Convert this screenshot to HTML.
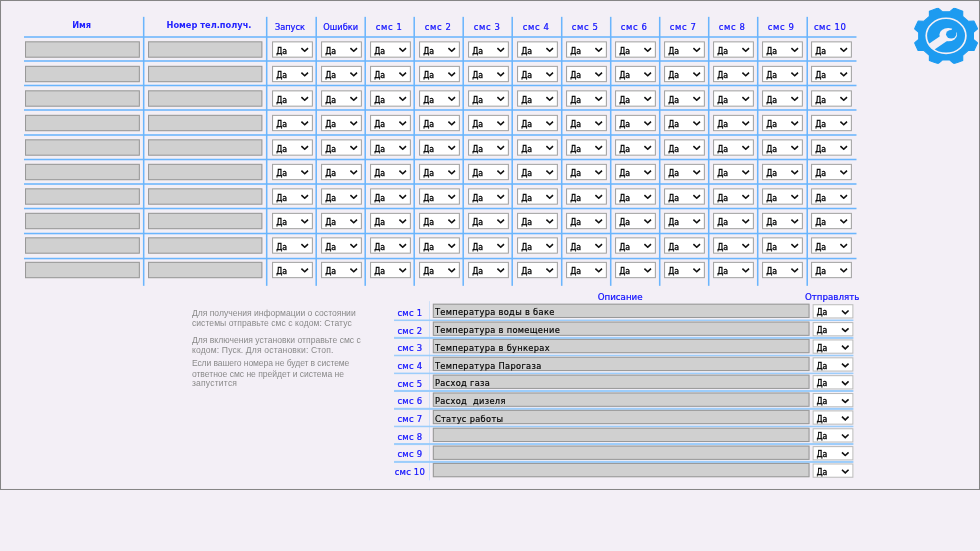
<!DOCTYPE html><html lang="ru"><head><meta charset="utf-8"><title>смс</title><style>
html,body{margin:0;padding:0;}
body{width:980px;height:551px;overflow:hidden;background:#f3eff6;font-family:"DejaVu Sans Condensed","Liberation Sans",sans-serif;}
#stage{position:absolute;left:0;top:0;width:1920px;height:1080px;transform:scale(0.510417);transform-origin:0 0;background:#f3eff6;overflow:hidden;filter:contrast(1);}
#frame{position:absolute;left:0;top:0;width:1920px;height:960px;border:2px solid #858585;border-right-width:2.5px;border-bottom-width:2.5px;box-sizing:border-box;}
table{border-collapse:separate;border-spacing:0;}
#t1{position:absolute;left:46px;top:33px;}
#t1 th,#t1 td{padding:0 0 0 3px;margin:0;box-sizing:border-box;vertical-align:top;}
#t1 th:first-child,#t1 td:first-child{padding-left:0;}
.v1{position:absolute;top:33px;height:527px;width:3px;background:#6ab5fd;}
#t1 th,.hd2,.lab{-webkit-text-stroke:0.45px #1212ff;}
#t1 th{height:37px;color:#1212ff;font-weight:normal;font-size:17.9px;text-align:center;vertical-align:top;line-height:20px;padding-top:9px;white-space:nowrap;}
#t1 th.b{font-weight:bold;font-size:18px;padding-top:6.4px;-webkit-text-stroke:0;color:#2222ff;}
#t1 th.s{font-size:18.4px;letter-spacing:1px;word-spacing:0.4px;}
#t1 th.s span{position:relative;left:-1.2px;}
#t1 th .sh{position:relative;left:-3.5px;}
#t1 td{height:48px;}
.h1{position:absolute;left:47px;width:1631px;height:3px;background:#6ab5fd;}
#t1 tr.last td{height:58px;}
#t1 .c1{width:234px;}
#t1 .c2{width:242px;}
#t1 .cs{width:96px;}
input.txt{display:block;box-sizing:border-box;border:2px solid #999;background:#d0d0d0;margin:0;padding:0 5px;font-family:"DejaVu Sans Condensed","Liberation Sans",sans-serif;color:#000;border-radius:0;outline:none;}
#t1 input.txt{width:225px;height:32px;margin:11px 0 0 3px;}
#t1 td.c2 input.txt{width:224px;margin-left:6.5px;}
.sel{position:relative;display:block;box-sizing:border-box;width:80px;height:32px;background:#fff;border:2px solid #a0a0a0;}
.sel select{position:absolute;left:0;top:0;width:100%;height:100%;box-sizing:border-box;-webkit-appearance:none;appearance:none;border:0;background:transparent;margin:0;padding:4px 0 0 6px;font-family:"DejaVu Sans Condensed","Liberation Sans",sans-serif;font-size:17px;color:#000;outline:none;-webkit-text-stroke:0.6px #000;}
.sel svg{position:absolute;right:6px;top:9px;width:16px;height:11px;pointer-events:none;}
#t1 .sel{margin:11px 0 0 8px;}
#info{position:absolute;left:376px;top:0;width:360px;color:#8a8a8a;font-family:"Liberation Sans","DejaVu Sans",sans-serif;font-size:16.8px;line-height:19.5px;}
#info p{position:absolute;left:0;margin:0;white-space:nowrap;}
#t2{position:absolute;left:0;top:0;}
.hd2{position:absolute;color:#1212ff;font-family:"DejaVu Sans","Liberation Sans",sans-serif;font-size:17px;line-height:20px;white-space:nowrap;}
.lab{position:absolute;left:772px;width:62px;text-align:center;color:#1212ff;font-size:18.4px;letter-spacing:0.4px;line-height:20px;white-space:nowrap;}
.hl{position:absolute;left:772px;width:900px;height:3.5px;background:#9ccdfb;}
#vl{position:absolute;left:840.7px;top:590px;width:1.7px;height:351px;background:#a8d2fa;}
#t2 .inp{position:absolute;left:848px;width:738px;height:28px;box-sizing:border-box;border:2px solid #999;background:#d0d0d0;}
#t2 .inp input{position:absolute;left:0;top:0;width:100%;height:29.5px;box-sizing:border-box;border:0;background:transparent;margin:0;padding:0 2px;font-family:"DejaVu Sans Condensed","Liberation Sans",sans-serif;font-size:18px;letter-spacing:0.63px;color:#000;outline:none;-webkit-text-stroke:0.35px #000;}
#t2 .sel{position:absolute;left:1592px;height:28px;border-color:#b9b9b9;}
#t2 .sel svg{top:8px;}
#t2 .sel select{padding-top:4px;padding-left:5.6px;}
#gear{position:absolute;left:1791px;top:14.8px;width:125px;height:110.5px;}
</style></head><body><div id="stage"><div id="frame"></div>
<table id="t1"><tr><th class="c1 b"><span style="position:relative;left:-3px">Имя</span></th><th class="c2 b"><span style="position:relative;left:7px">Номер тел.получ.</span></th>
<th class="cs"><span class="sh">Запуск</span></th>
<th class="cs">Ошибки</th>
<th class="cs s"><span>смс 1</span></th>
<th class="cs s"><span>смс 2</span></th>
<th class="cs s"><span>смс 3</span></th>
<th class="cs s"><span>смс 4</span></th>
<th class="cs s"><span>смс 5</span></th>
<th class="cs s"><span>смс 6</span></th>
<th class="cs s"><span>смс 7</span></th>
<th class="cs s"><span>смс 8</span></th>
<th class="cs s"><span>смс 9</span></th>
<th class="cs s"><span>смс 10</span></th>
</tr>
<tr><td class="c1"><input class="txt" type="text"></td><td class="c2"><input class="txt" type="text"></td>
<td class="cs"><div class="sel"><select><option>Да</option><option>Нет</option></select><svg viewBox="0 0 16 11"><polyline points="1.5,2.3 8,8.4 14.5,2.3" fill="none" stroke="#111" stroke-width="3.2"/></svg></div></td>
<td class="cs"><div class="sel"><select><option>Да</option><option>Нет</option></select><svg viewBox="0 0 16 11"><polyline points="1.5,2.3 8,8.4 14.5,2.3" fill="none" stroke="#111" stroke-width="3.2"/></svg></div></td>
<td class="cs"><div class="sel"><select><option>Да</option><option>Нет</option></select><svg viewBox="0 0 16 11"><polyline points="1.5,2.3 8,8.4 14.5,2.3" fill="none" stroke="#111" stroke-width="3.2"/></svg></div></td>
<td class="cs"><div class="sel"><select><option>Да</option><option>Нет</option></select><svg viewBox="0 0 16 11"><polyline points="1.5,2.3 8,8.4 14.5,2.3" fill="none" stroke="#111" stroke-width="3.2"/></svg></div></td>
<td class="cs"><div class="sel"><select><option>Да</option><option>Нет</option></select><svg viewBox="0 0 16 11"><polyline points="1.5,2.3 8,8.4 14.5,2.3" fill="none" stroke="#111" stroke-width="3.2"/></svg></div></td>
<td class="cs"><div class="sel"><select><option>Да</option><option>Нет</option></select><svg viewBox="0 0 16 11"><polyline points="1.5,2.3 8,8.4 14.5,2.3" fill="none" stroke="#111" stroke-width="3.2"/></svg></div></td>
<td class="cs"><div class="sel"><select><option>Да</option><option>Нет</option></select><svg viewBox="0 0 16 11"><polyline points="1.5,2.3 8,8.4 14.5,2.3" fill="none" stroke="#111" stroke-width="3.2"/></svg></div></td>
<td class="cs"><div class="sel"><select><option>Да</option><option>Нет</option></select><svg viewBox="0 0 16 11"><polyline points="1.5,2.3 8,8.4 14.5,2.3" fill="none" stroke="#111" stroke-width="3.2"/></svg></div></td>
<td class="cs"><div class="sel"><select><option>Да</option><option>Нет</option></select><svg viewBox="0 0 16 11"><polyline points="1.5,2.3 8,8.4 14.5,2.3" fill="none" stroke="#111" stroke-width="3.2"/></svg></div></td>
<td class="cs"><div class="sel"><select><option>Да</option><option>Нет</option></select><svg viewBox="0 0 16 11"><polyline points="1.5,2.3 8,8.4 14.5,2.3" fill="none" stroke="#111" stroke-width="3.2"/></svg></div></td>
<td class="cs"><div class="sel"><select><option>Да</option><option>Нет</option></select><svg viewBox="0 0 16 11"><polyline points="1.5,2.3 8,8.4 14.5,2.3" fill="none" stroke="#111" stroke-width="3.2"/></svg></div></td>
<td class="cs"><div class="sel"><select><option>Да</option><option>Нет</option></select><svg viewBox="0 0 16 11"><polyline points="1.5,2.3 8,8.4 14.5,2.3" fill="none" stroke="#111" stroke-width="3.2"/></svg></div></td>
</tr>
<tr><td class="c1"><input class="txt" type="text"></td><td class="c2"><input class="txt" type="text"></td>
<td class="cs"><div class="sel"><select><option>Да</option><option>Нет</option></select><svg viewBox="0 0 16 11"><polyline points="1.5,2.3 8,8.4 14.5,2.3" fill="none" stroke="#111" stroke-width="3.2"/></svg></div></td>
<td class="cs"><div class="sel"><select><option>Да</option><option>Нет</option></select><svg viewBox="0 0 16 11"><polyline points="1.5,2.3 8,8.4 14.5,2.3" fill="none" stroke="#111" stroke-width="3.2"/></svg></div></td>
<td class="cs"><div class="sel"><select><option>Да</option><option>Нет</option></select><svg viewBox="0 0 16 11"><polyline points="1.5,2.3 8,8.4 14.5,2.3" fill="none" stroke="#111" stroke-width="3.2"/></svg></div></td>
<td class="cs"><div class="sel"><select><option>Да</option><option>Нет</option></select><svg viewBox="0 0 16 11"><polyline points="1.5,2.3 8,8.4 14.5,2.3" fill="none" stroke="#111" stroke-width="3.2"/></svg></div></td>
<td class="cs"><div class="sel"><select><option>Да</option><option>Нет</option></select><svg viewBox="0 0 16 11"><polyline points="1.5,2.3 8,8.4 14.5,2.3" fill="none" stroke="#111" stroke-width="3.2"/></svg></div></td>
<td class="cs"><div class="sel"><select><option>Да</option><option>Нет</option></select><svg viewBox="0 0 16 11"><polyline points="1.5,2.3 8,8.4 14.5,2.3" fill="none" stroke="#111" stroke-width="3.2"/></svg></div></td>
<td class="cs"><div class="sel"><select><option>Да</option><option>Нет</option></select><svg viewBox="0 0 16 11"><polyline points="1.5,2.3 8,8.4 14.5,2.3" fill="none" stroke="#111" stroke-width="3.2"/></svg></div></td>
<td class="cs"><div class="sel"><select><option>Да</option><option>Нет</option></select><svg viewBox="0 0 16 11"><polyline points="1.5,2.3 8,8.4 14.5,2.3" fill="none" stroke="#111" stroke-width="3.2"/></svg></div></td>
<td class="cs"><div class="sel"><select><option>Да</option><option>Нет</option></select><svg viewBox="0 0 16 11"><polyline points="1.5,2.3 8,8.4 14.5,2.3" fill="none" stroke="#111" stroke-width="3.2"/></svg></div></td>
<td class="cs"><div class="sel"><select><option>Да</option><option>Нет</option></select><svg viewBox="0 0 16 11"><polyline points="1.5,2.3 8,8.4 14.5,2.3" fill="none" stroke="#111" stroke-width="3.2"/></svg></div></td>
<td class="cs"><div class="sel"><select><option>Да</option><option>Нет</option></select><svg viewBox="0 0 16 11"><polyline points="1.5,2.3 8,8.4 14.5,2.3" fill="none" stroke="#111" stroke-width="3.2"/></svg></div></td>
<td class="cs"><div class="sel"><select><option>Да</option><option>Нет</option></select><svg viewBox="0 0 16 11"><polyline points="1.5,2.3 8,8.4 14.5,2.3" fill="none" stroke="#111" stroke-width="3.2"/></svg></div></td>
</tr>
<tr><td class="c1"><input class="txt" type="text"></td><td class="c2"><input class="txt" type="text"></td>
<td class="cs"><div class="sel"><select><option>Да</option><option>Нет</option></select><svg viewBox="0 0 16 11"><polyline points="1.5,2.3 8,8.4 14.5,2.3" fill="none" stroke="#111" stroke-width="3.2"/></svg></div></td>
<td class="cs"><div class="sel"><select><option>Да</option><option>Нет</option></select><svg viewBox="0 0 16 11"><polyline points="1.5,2.3 8,8.4 14.5,2.3" fill="none" stroke="#111" stroke-width="3.2"/></svg></div></td>
<td class="cs"><div class="sel"><select><option>Да</option><option>Нет</option></select><svg viewBox="0 0 16 11"><polyline points="1.5,2.3 8,8.4 14.5,2.3" fill="none" stroke="#111" stroke-width="3.2"/></svg></div></td>
<td class="cs"><div class="sel"><select><option>Да</option><option>Нет</option></select><svg viewBox="0 0 16 11"><polyline points="1.5,2.3 8,8.4 14.5,2.3" fill="none" stroke="#111" stroke-width="3.2"/></svg></div></td>
<td class="cs"><div class="sel"><select><option>Да</option><option>Нет</option></select><svg viewBox="0 0 16 11"><polyline points="1.5,2.3 8,8.4 14.5,2.3" fill="none" stroke="#111" stroke-width="3.2"/></svg></div></td>
<td class="cs"><div class="sel"><select><option>Да</option><option>Нет</option></select><svg viewBox="0 0 16 11"><polyline points="1.5,2.3 8,8.4 14.5,2.3" fill="none" stroke="#111" stroke-width="3.2"/></svg></div></td>
<td class="cs"><div class="sel"><select><option>Да</option><option>Нет</option></select><svg viewBox="0 0 16 11"><polyline points="1.5,2.3 8,8.4 14.5,2.3" fill="none" stroke="#111" stroke-width="3.2"/></svg></div></td>
<td class="cs"><div class="sel"><select><option>Да</option><option>Нет</option></select><svg viewBox="0 0 16 11"><polyline points="1.5,2.3 8,8.4 14.5,2.3" fill="none" stroke="#111" stroke-width="3.2"/></svg></div></td>
<td class="cs"><div class="sel"><select><option>Да</option><option>Нет</option></select><svg viewBox="0 0 16 11"><polyline points="1.5,2.3 8,8.4 14.5,2.3" fill="none" stroke="#111" stroke-width="3.2"/></svg></div></td>
<td class="cs"><div class="sel"><select><option>Да</option><option>Нет</option></select><svg viewBox="0 0 16 11"><polyline points="1.5,2.3 8,8.4 14.5,2.3" fill="none" stroke="#111" stroke-width="3.2"/></svg></div></td>
<td class="cs"><div class="sel"><select><option>Да</option><option>Нет</option></select><svg viewBox="0 0 16 11"><polyline points="1.5,2.3 8,8.4 14.5,2.3" fill="none" stroke="#111" stroke-width="3.2"/></svg></div></td>
<td class="cs"><div class="sel"><select><option>Да</option><option>Нет</option></select><svg viewBox="0 0 16 11"><polyline points="1.5,2.3 8,8.4 14.5,2.3" fill="none" stroke="#111" stroke-width="3.2"/></svg></div></td>
</tr>
<tr><td class="c1"><input class="txt" type="text"></td><td class="c2"><input class="txt" type="text"></td>
<td class="cs"><div class="sel"><select><option>Да</option><option>Нет</option></select><svg viewBox="0 0 16 11"><polyline points="1.5,2.3 8,8.4 14.5,2.3" fill="none" stroke="#111" stroke-width="3.2"/></svg></div></td>
<td class="cs"><div class="sel"><select><option>Да</option><option>Нет</option></select><svg viewBox="0 0 16 11"><polyline points="1.5,2.3 8,8.4 14.5,2.3" fill="none" stroke="#111" stroke-width="3.2"/></svg></div></td>
<td class="cs"><div class="sel"><select><option>Да</option><option>Нет</option></select><svg viewBox="0 0 16 11"><polyline points="1.5,2.3 8,8.4 14.5,2.3" fill="none" stroke="#111" stroke-width="3.2"/></svg></div></td>
<td class="cs"><div class="sel"><select><option>Да</option><option>Нет</option></select><svg viewBox="0 0 16 11"><polyline points="1.5,2.3 8,8.4 14.5,2.3" fill="none" stroke="#111" stroke-width="3.2"/></svg></div></td>
<td class="cs"><div class="sel"><select><option>Да</option><option>Нет</option></select><svg viewBox="0 0 16 11"><polyline points="1.5,2.3 8,8.4 14.5,2.3" fill="none" stroke="#111" stroke-width="3.2"/></svg></div></td>
<td class="cs"><div class="sel"><select><option>Да</option><option>Нет</option></select><svg viewBox="0 0 16 11"><polyline points="1.5,2.3 8,8.4 14.5,2.3" fill="none" stroke="#111" stroke-width="3.2"/></svg></div></td>
<td class="cs"><div class="sel"><select><option>Да</option><option>Нет</option></select><svg viewBox="0 0 16 11"><polyline points="1.5,2.3 8,8.4 14.5,2.3" fill="none" stroke="#111" stroke-width="3.2"/></svg></div></td>
<td class="cs"><div class="sel"><select><option>Да</option><option>Нет</option></select><svg viewBox="0 0 16 11"><polyline points="1.5,2.3 8,8.4 14.5,2.3" fill="none" stroke="#111" stroke-width="3.2"/></svg></div></td>
<td class="cs"><div class="sel"><select><option>Да</option><option>Нет</option></select><svg viewBox="0 0 16 11"><polyline points="1.5,2.3 8,8.4 14.5,2.3" fill="none" stroke="#111" stroke-width="3.2"/></svg></div></td>
<td class="cs"><div class="sel"><select><option>Да</option><option>Нет</option></select><svg viewBox="0 0 16 11"><polyline points="1.5,2.3 8,8.4 14.5,2.3" fill="none" stroke="#111" stroke-width="3.2"/></svg></div></td>
<td class="cs"><div class="sel"><select><option>Да</option><option>Нет</option></select><svg viewBox="0 0 16 11"><polyline points="1.5,2.3 8,8.4 14.5,2.3" fill="none" stroke="#111" stroke-width="3.2"/></svg></div></td>
<td class="cs"><div class="sel"><select><option>Да</option><option>Нет</option></select><svg viewBox="0 0 16 11"><polyline points="1.5,2.3 8,8.4 14.5,2.3" fill="none" stroke="#111" stroke-width="3.2"/></svg></div></td>
</tr>
<tr><td class="c1"><input class="txt" type="text"></td><td class="c2"><input class="txt" type="text"></td>
<td class="cs"><div class="sel"><select><option>Да</option><option>Нет</option></select><svg viewBox="0 0 16 11"><polyline points="1.5,2.3 8,8.4 14.5,2.3" fill="none" stroke="#111" stroke-width="3.2"/></svg></div></td>
<td class="cs"><div class="sel"><select><option>Да</option><option>Нет</option></select><svg viewBox="0 0 16 11"><polyline points="1.5,2.3 8,8.4 14.5,2.3" fill="none" stroke="#111" stroke-width="3.2"/></svg></div></td>
<td class="cs"><div class="sel"><select><option>Да</option><option>Нет</option></select><svg viewBox="0 0 16 11"><polyline points="1.5,2.3 8,8.4 14.5,2.3" fill="none" stroke="#111" stroke-width="3.2"/></svg></div></td>
<td class="cs"><div class="sel"><select><option>Да</option><option>Нет</option></select><svg viewBox="0 0 16 11"><polyline points="1.5,2.3 8,8.4 14.5,2.3" fill="none" stroke="#111" stroke-width="3.2"/></svg></div></td>
<td class="cs"><div class="sel"><select><option>Да</option><option>Нет</option></select><svg viewBox="0 0 16 11"><polyline points="1.5,2.3 8,8.4 14.5,2.3" fill="none" stroke="#111" stroke-width="3.2"/></svg></div></td>
<td class="cs"><div class="sel"><select><option>Да</option><option>Нет</option></select><svg viewBox="0 0 16 11"><polyline points="1.5,2.3 8,8.4 14.5,2.3" fill="none" stroke="#111" stroke-width="3.2"/></svg></div></td>
<td class="cs"><div class="sel"><select><option>Да</option><option>Нет</option></select><svg viewBox="0 0 16 11"><polyline points="1.5,2.3 8,8.4 14.5,2.3" fill="none" stroke="#111" stroke-width="3.2"/></svg></div></td>
<td class="cs"><div class="sel"><select><option>Да</option><option>Нет</option></select><svg viewBox="0 0 16 11"><polyline points="1.5,2.3 8,8.4 14.5,2.3" fill="none" stroke="#111" stroke-width="3.2"/></svg></div></td>
<td class="cs"><div class="sel"><select><option>Да</option><option>Нет</option></select><svg viewBox="0 0 16 11"><polyline points="1.5,2.3 8,8.4 14.5,2.3" fill="none" stroke="#111" stroke-width="3.2"/></svg></div></td>
<td class="cs"><div class="sel"><select><option>Да</option><option>Нет</option></select><svg viewBox="0 0 16 11"><polyline points="1.5,2.3 8,8.4 14.5,2.3" fill="none" stroke="#111" stroke-width="3.2"/></svg></div></td>
<td class="cs"><div class="sel"><select><option>Да</option><option>Нет</option></select><svg viewBox="0 0 16 11"><polyline points="1.5,2.3 8,8.4 14.5,2.3" fill="none" stroke="#111" stroke-width="3.2"/></svg></div></td>
<td class="cs"><div class="sel"><select><option>Да</option><option>Нет</option></select><svg viewBox="0 0 16 11"><polyline points="1.5,2.3 8,8.4 14.5,2.3" fill="none" stroke="#111" stroke-width="3.2"/></svg></div></td>
</tr>
<tr><td class="c1"><input class="txt" type="text"></td><td class="c2"><input class="txt" type="text"></td>
<td class="cs"><div class="sel"><select><option>Да</option><option>Нет</option></select><svg viewBox="0 0 16 11"><polyline points="1.5,2.3 8,8.4 14.5,2.3" fill="none" stroke="#111" stroke-width="3.2"/></svg></div></td>
<td class="cs"><div class="sel"><select><option>Да</option><option>Нет</option></select><svg viewBox="0 0 16 11"><polyline points="1.5,2.3 8,8.4 14.5,2.3" fill="none" stroke="#111" stroke-width="3.2"/></svg></div></td>
<td class="cs"><div class="sel"><select><option>Да</option><option>Нет</option></select><svg viewBox="0 0 16 11"><polyline points="1.5,2.3 8,8.4 14.5,2.3" fill="none" stroke="#111" stroke-width="3.2"/></svg></div></td>
<td class="cs"><div class="sel"><select><option>Да</option><option>Нет</option></select><svg viewBox="0 0 16 11"><polyline points="1.5,2.3 8,8.4 14.5,2.3" fill="none" stroke="#111" stroke-width="3.2"/></svg></div></td>
<td class="cs"><div class="sel"><select><option>Да</option><option>Нет</option></select><svg viewBox="0 0 16 11"><polyline points="1.5,2.3 8,8.4 14.5,2.3" fill="none" stroke="#111" stroke-width="3.2"/></svg></div></td>
<td class="cs"><div class="sel"><select><option>Да</option><option>Нет</option></select><svg viewBox="0 0 16 11"><polyline points="1.5,2.3 8,8.4 14.5,2.3" fill="none" stroke="#111" stroke-width="3.2"/></svg></div></td>
<td class="cs"><div class="sel"><select><option>Да</option><option>Нет</option></select><svg viewBox="0 0 16 11"><polyline points="1.5,2.3 8,8.4 14.5,2.3" fill="none" stroke="#111" stroke-width="3.2"/></svg></div></td>
<td class="cs"><div class="sel"><select><option>Да</option><option>Нет</option></select><svg viewBox="0 0 16 11"><polyline points="1.5,2.3 8,8.4 14.5,2.3" fill="none" stroke="#111" stroke-width="3.2"/></svg></div></td>
<td class="cs"><div class="sel"><select><option>Да</option><option>Нет</option></select><svg viewBox="0 0 16 11"><polyline points="1.5,2.3 8,8.4 14.5,2.3" fill="none" stroke="#111" stroke-width="3.2"/></svg></div></td>
<td class="cs"><div class="sel"><select><option>Да</option><option>Нет</option></select><svg viewBox="0 0 16 11"><polyline points="1.5,2.3 8,8.4 14.5,2.3" fill="none" stroke="#111" stroke-width="3.2"/></svg></div></td>
<td class="cs"><div class="sel"><select><option>Да</option><option>Нет</option></select><svg viewBox="0 0 16 11"><polyline points="1.5,2.3 8,8.4 14.5,2.3" fill="none" stroke="#111" stroke-width="3.2"/></svg></div></td>
<td class="cs"><div class="sel"><select><option>Да</option><option>Нет</option></select><svg viewBox="0 0 16 11"><polyline points="1.5,2.3 8,8.4 14.5,2.3" fill="none" stroke="#111" stroke-width="3.2"/></svg></div></td>
</tr>
<tr><td class="c1"><input class="txt" type="text"></td><td class="c2"><input class="txt" type="text"></td>
<td class="cs"><div class="sel"><select><option>Да</option><option>Нет</option></select><svg viewBox="0 0 16 11"><polyline points="1.5,2.3 8,8.4 14.5,2.3" fill="none" stroke="#111" stroke-width="3.2"/></svg></div></td>
<td class="cs"><div class="sel"><select><option>Да</option><option>Нет</option></select><svg viewBox="0 0 16 11"><polyline points="1.5,2.3 8,8.4 14.5,2.3" fill="none" stroke="#111" stroke-width="3.2"/></svg></div></td>
<td class="cs"><div class="sel"><select><option>Да</option><option>Нет</option></select><svg viewBox="0 0 16 11"><polyline points="1.5,2.3 8,8.4 14.5,2.3" fill="none" stroke="#111" stroke-width="3.2"/></svg></div></td>
<td class="cs"><div class="sel"><select><option>Да</option><option>Нет</option></select><svg viewBox="0 0 16 11"><polyline points="1.5,2.3 8,8.4 14.5,2.3" fill="none" stroke="#111" stroke-width="3.2"/></svg></div></td>
<td class="cs"><div class="sel"><select><option>Да</option><option>Нет</option></select><svg viewBox="0 0 16 11"><polyline points="1.5,2.3 8,8.4 14.5,2.3" fill="none" stroke="#111" stroke-width="3.2"/></svg></div></td>
<td class="cs"><div class="sel"><select><option>Да</option><option>Нет</option></select><svg viewBox="0 0 16 11"><polyline points="1.5,2.3 8,8.4 14.5,2.3" fill="none" stroke="#111" stroke-width="3.2"/></svg></div></td>
<td class="cs"><div class="sel"><select><option>Да</option><option>Нет</option></select><svg viewBox="0 0 16 11"><polyline points="1.5,2.3 8,8.4 14.5,2.3" fill="none" stroke="#111" stroke-width="3.2"/></svg></div></td>
<td class="cs"><div class="sel"><select><option>Да</option><option>Нет</option></select><svg viewBox="0 0 16 11"><polyline points="1.5,2.3 8,8.4 14.5,2.3" fill="none" stroke="#111" stroke-width="3.2"/></svg></div></td>
<td class="cs"><div class="sel"><select><option>Да</option><option>Нет</option></select><svg viewBox="0 0 16 11"><polyline points="1.5,2.3 8,8.4 14.5,2.3" fill="none" stroke="#111" stroke-width="3.2"/></svg></div></td>
<td class="cs"><div class="sel"><select><option>Да</option><option>Нет</option></select><svg viewBox="0 0 16 11"><polyline points="1.5,2.3 8,8.4 14.5,2.3" fill="none" stroke="#111" stroke-width="3.2"/></svg></div></td>
<td class="cs"><div class="sel"><select><option>Да</option><option>Нет</option></select><svg viewBox="0 0 16 11"><polyline points="1.5,2.3 8,8.4 14.5,2.3" fill="none" stroke="#111" stroke-width="3.2"/></svg></div></td>
<td class="cs"><div class="sel"><select><option>Да</option><option>Нет</option></select><svg viewBox="0 0 16 11"><polyline points="1.5,2.3 8,8.4 14.5,2.3" fill="none" stroke="#111" stroke-width="3.2"/></svg></div></td>
</tr>
<tr><td class="c1"><input class="txt" type="text"></td><td class="c2"><input class="txt" type="text"></td>
<td class="cs"><div class="sel"><select><option>Да</option><option>Нет</option></select><svg viewBox="0 0 16 11"><polyline points="1.5,2.3 8,8.4 14.5,2.3" fill="none" stroke="#111" stroke-width="3.2"/></svg></div></td>
<td class="cs"><div class="sel"><select><option>Да</option><option>Нет</option></select><svg viewBox="0 0 16 11"><polyline points="1.5,2.3 8,8.4 14.5,2.3" fill="none" stroke="#111" stroke-width="3.2"/></svg></div></td>
<td class="cs"><div class="sel"><select><option>Да</option><option>Нет</option></select><svg viewBox="0 0 16 11"><polyline points="1.5,2.3 8,8.4 14.5,2.3" fill="none" stroke="#111" stroke-width="3.2"/></svg></div></td>
<td class="cs"><div class="sel"><select><option>Да</option><option>Нет</option></select><svg viewBox="0 0 16 11"><polyline points="1.5,2.3 8,8.4 14.5,2.3" fill="none" stroke="#111" stroke-width="3.2"/></svg></div></td>
<td class="cs"><div class="sel"><select><option>Да</option><option>Нет</option></select><svg viewBox="0 0 16 11"><polyline points="1.5,2.3 8,8.4 14.5,2.3" fill="none" stroke="#111" stroke-width="3.2"/></svg></div></td>
<td class="cs"><div class="sel"><select><option>Да</option><option>Нет</option></select><svg viewBox="0 0 16 11"><polyline points="1.5,2.3 8,8.4 14.5,2.3" fill="none" stroke="#111" stroke-width="3.2"/></svg></div></td>
<td class="cs"><div class="sel"><select><option>Да</option><option>Нет</option></select><svg viewBox="0 0 16 11"><polyline points="1.5,2.3 8,8.4 14.5,2.3" fill="none" stroke="#111" stroke-width="3.2"/></svg></div></td>
<td class="cs"><div class="sel"><select><option>Да</option><option>Нет</option></select><svg viewBox="0 0 16 11"><polyline points="1.5,2.3 8,8.4 14.5,2.3" fill="none" stroke="#111" stroke-width="3.2"/></svg></div></td>
<td class="cs"><div class="sel"><select><option>Да</option><option>Нет</option></select><svg viewBox="0 0 16 11"><polyline points="1.5,2.3 8,8.4 14.5,2.3" fill="none" stroke="#111" stroke-width="3.2"/></svg></div></td>
<td class="cs"><div class="sel"><select><option>Да</option><option>Нет</option></select><svg viewBox="0 0 16 11"><polyline points="1.5,2.3 8,8.4 14.5,2.3" fill="none" stroke="#111" stroke-width="3.2"/></svg></div></td>
<td class="cs"><div class="sel"><select><option>Да</option><option>Нет</option></select><svg viewBox="0 0 16 11"><polyline points="1.5,2.3 8,8.4 14.5,2.3" fill="none" stroke="#111" stroke-width="3.2"/></svg></div></td>
<td class="cs"><div class="sel"><select><option>Да</option><option>Нет</option></select><svg viewBox="0 0 16 11"><polyline points="1.5,2.3 8,8.4 14.5,2.3" fill="none" stroke="#111" stroke-width="3.2"/></svg></div></td>
</tr>
<tr><td class="c1"><input class="txt" type="text"></td><td class="c2"><input class="txt" type="text"></td>
<td class="cs"><div class="sel"><select><option>Да</option><option>Нет</option></select><svg viewBox="0 0 16 11"><polyline points="1.5,2.3 8,8.4 14.5,2.3" fill="none" stroke="#111" stroke-width="3.2"/></svg></div></td>
<td class="cs"><div class="sel"><select><option>Да</option><option>Нет</option></select><svg viewBox="0 0 16 11"><polyline points="1.5,2.3 8,8.4 14.5,2.3" fill="none" stroke="#111" stroke-width="3.2"/></svg></div></td>
<td class="cs"><div class="sel"><select><option>Да</option><option>Нет</option></select><svg viewBox="0 0 16 11"><polyline points="1.5,2.3 8,8.4 14.5,2.3" fill="none" stroke="#111" stroke-width="3.2"/></svg></div></td>
<td class="cs"><div class="sel"><select><option>Да</option><option>Нет</option></select><svg viewBox="0 0 16 11"><polyline points="1.5,2.3 8,8.4 14.5,2.3" fill="none" stroke="#111" stroke-width="3.2"/></svg></div></td>
<td class="cs"><div class="sel"><select><option>Да</option><option>Нет</option></select><svg viewBox="0 0 16 11"><polyline points="1.5,2.3 8,8.4 14.5,2.3" fill="none" stroke="#111" stroke-width="3.2"/></svg></div></td>
<td class="cs"><div class="sel"><select><option>Да</option><option>Нет</option></select><svg viewBox="0 0 16 11"><polyline points="1.5,2.3 8,8.4 14.5,2.3" fill="none" stroke="#111" stroke-width="3.2"/></svg></div></td>
<td class="cs"><div class="sel"><select><option>Да</option><option>Нет</option></select><svg viewBox="0 0 16 11"><polyline points="1.5,2.3 8,8.4 14.5,2.3" fill="none" stroke="#111" stroke-width="3.2"/></svg></div></td>
<td class="cs"><div class="sel"><select><option>Да</option><option>Нет</option></select><svg viewBox="0 0 16 11"><polyline points="1.5,2.3 8,8.4 14.5,2.3" fill="none" stroke="#111" stroke-width="3.2"/></svg></div></td>
<td class="cs"><div class="sel"><select><option>Да</option><option>Нет</option></select><svg viewBox="0 0 16 11"><polyline points="1.5,2.3 8,8.4 14.5,2.3" fill="none" stroke="#111" stroke-width="3.2"/></svg></div></td>
<td class="cs"><div class="sel"><select><option>Да</option><option>Нет</option></select><svg viewBox="0 0 16 11"><polyline points="1.5,2.3 8,8.4 14.5,2.3" fill="none" stroke="#111" stroke-width="3.2"/></svg></div></td>
<td class="cs"><div class="sel"><select><option>Да</option><option>Нет</option></select><svg viewBox="0 0 16 11"><polyline points="1.5,2.3 8,8.4 14.5,2.3" fill="none" stroke="#111" stroke-width="3.2"/></svg></div></td>
<td class="cs"><div class="sel"><select><option>Да</option><option>Нет</option></select><svg viewBox="0 0 16 11"><polyline points="1.5,2.3 8,8.4 14.5,2.3" fill="none" stroke="#111" stroke-width="3.2"/></svg></div></td>
</tr>
<tr class="last"><td class="c1"><input class="txt" type="text"></td><td class="c2"><input class="txt" type="text"></td>
<td class="cs"><div class="sel"><select><option>Да</option><option>Нет</option></select><svg viewBox="0 0 16 11"><polyline points="1.5,2.3 8,8.4 14.5,2.3" fill="none" stroke="#111" stroke-width="3.2"/></svg></div></td>
<td class="cs"><div class="sel"><select><option>Да</option><option>Нет</option></select><svg viewBox="0 0 16 11"><polyline points="1.5,2.3 8,8.4 14.5,2.3" fill="none" stroke="#111" stroke-width="3.2"/></svg></div></td>
<td class="cs"><div class="sel"><select><option>Да</option><option>Нет</option></select><svg viewBox="0 0 16 11"><polyline points="1.5,2.3 8,8.4 14.5,2.3" fill="none" stroke="#111" stroke-width="3.2"/></svg></div></td>
<td class="cs"><div class="sel"><select><option>Да</option><option>Нет</option></select><svg viewBox="0 0 16 11"><polyline points="1.5,2.3 8,8.4 14.5,2.3" fill="none" stroke="#111" stroke-width="3.2"/></svg></div></td>
<td class="cs"><div class="sel"><select><option>Да</option><option>Нет</option></select><svg viewBox="0 0 16 11"><polyline points="1.5,2.3 8,8.4 14.5,2.3" fill="none" stroke="#111" stroke-width="3.2"/></svg></div></td>
<td class="cs"><div class="sel"><select><option>Да</option><option>Нет</option></select><svg viewBox="0 0 16 11"><polyline points="1.5,2.3 8,8.4 14.5,2.3" fill="none" stroke="#111" stroke-width="3.2"/></svg></div></td>
<td class="cs"><div class="sel"><select><option>Да</option><option>Нет</option></select><svg viewBox="0 0 16 11"><polyline points="1.5,2.3 8,8.4 14.5,2.3" fill="none" stroke="#111" stroke-width="3.2"/></svg></div></td>
<td class="cs"><div class="sel"><select><option>Да</option><option>Нет</option></select><svg viewBox="0 0 16 11"><polyline points="1.5,2.3 8,8.4 14.5,2.3" fill="none" stroke="#111" stroke-width="3.2"/></svg></div></td>
<td class="cs"><div class="sel"><select><option>Да</option><option>Нет</option></select><svg viewBox="0 0 16 11"><polyline points="1.5,2.3 8,8.4 14.5,2.3" fill="none" stroke="#111" stroke-width="3.2"/></svg></div></td>
<td class="cs"><div class="sel"><select><option>Да</option><option>Нет</option></select><svg viewBox="0 0 16 11"><polyline points="1.5,2.3 8,8.4 14.5,2.3" fill="none" stroke="#111" stroke-width="3.2"/></svg></div></td>
<td class="cs"><div class="sel"><select><option>Да</option><option>Нет</option></select><svg viewBox="0 0 16 11"><polyline points="1.5,2.3 8,8.4 14.5,2.3" fill="none" stroke="#111" stroke-width="3.2"/></svg></div></td>
<td class="cs"><div class="sel"><select><option>Да</option><option>Нет</option></select><svg viewBox="0 0 16 11"><polyline points="1.5,2.3 8,8.4 14.5,2.3" fill="none" stroke="#111" stroke-width="3.2"/></svg></div></td>
</tr>
</table>
<div class="h1" style="top:70.60px"></div>
<div class="h1" style="top:118.30px"></div>
<div class="h1" style="top:166.40px"></div>
<div class="h1" style="top:214.40px"></div>
<div class="h1" style="top:262.60px"></div>
<div class="h1" style="top:311.19px"></div>
<div class="h1" style="top:359.38px"></div>
<div class="h1" style="top:407.48px"></div>
<div class="h1" style="top:455.58px"></div>
<div class="h1" style="top:505.14px"></div>
<div class="v1" style="left:279.90px"></div>
<div class="v1" style="left:521.40px"></div>
<div class="v1" style="left:617.60px"></div>
<div class="v1" style="left:713.80px"></div>
<div class="v1" style="left:810.00px"></div>
<div class="v1" style="left:906.20px"></div>
<div class="v1" style="left:1002.40px"></div>
<div class="v1" style="left:1098.60px"></div>
<div class="v1" style="left:1194.80px"></div>
<div class="v1" style="left:1291.00px"></div>
<div class="v1" style="left:1387.20px"></div>
<div class="v1" style="left:1483.40px"></div>
<div class="v1" style="left:1579.60px"></div>
<div id="info">
<p style="top:604.1px;letter-spacing:0.000px">Для получения информации о состоянии</p>
<p style="top:623.1px;letter-spacing:0.110px">системы отправьте смс с кодом: Статус</p>
<p style="top:656.8px;letter-spacing:0.030px">Для включения установки отправьте смс с</p>
<p style="top:676.0px;letter-spacing:0.300px">кодом: Пуск. Для остановки: Стоп.</p>
<p style="top:703.2px;letter-spacing:-0.190px">Если вашего номера не будет в системе</p>
<p style="top:723.0px;letter-spacing:-0.055px">ответное смс не прейдет и система не</p>
<p style="top:742.0px;letter-spacing:0.400px">запустится</p>
</div>
<div id="t2">
<div class="hd2" style="left:1171px;top:572.2px">Описание</div>
<div class="hd2" style="left:1577px;top:572.2px">Отправлять</div>
<div id="vl"></div>
<div class="lab" style="top:602.8px">смс 1</div>
<div class="inp" style="top:595.0px"><input type="text" value="Температура воды в баке"></div>
<div class="sel" style="top:596.0px"><select><option>Да</option><option>Нет</option></select><svg viewBox="0 0 16 11"><polyline points="1.5,2.3 8,8.4 14.5,2.3" fill="none" stroke="#111" stroke-width="3.2"/></svg></div>
<div class="hl" style="top:625.5px"></div>
<div class="lab" style="top:637.5px">смс 2</div>
<div class="inp" style="top:629.7px"><input type="text" value="Температура в помещение"></div>
<div class="sel" style="top:630.7px"><select><option>Да</option><option>Нет</option></select><svg viewBox="0 0 16 11"><polyline points="1.5,2.3 8,8.4 14.5,2.3" fill="none" stroke="#111" stroke-width="3.2"/></svg></div>
<div class="hl" style="top:660.2px"></div>
<div class="lab" style="top:672.2px">смс 3</div>
<div class="inp" style="top:664.4px"><input type="text" value="Температура в бункерах"></div>
<div class="sel" style="top:665.4px"><select><option>Да</option><option>Нет</option></select><svg viewBox="0 0 16 11"><polyline points="1.5,2.3 8,8.4 14.5,2.3" fill="none" stroke="#111" stroke-width="3.2"/></svg></div>
<div class="hl" style="top:694.9px"></div>
<div class="lab" style="top:706.9px">смс 4</div>
<div class="inp" style="top:699.1px"><input type="text" value="Температура Парогаза"></div>
<div class="sel" style="top:700.1px"><select><option>Да</option><option>Нет</option></select><svg viewBox="0 0 16 11"><polyline points="1.5,2.3 8,8.4 14.5,2.3" fill="none" stroke="#111" stroke-width="3.2"/></svg></div>
<div class="hl" style="top:729.6px"></div>
<div class="lab" style="top:741.6px">смс 5</div>
<div class="inp" style="top:733.8px"><input type="text" value="Расход газа"></div>
<div class="sel" style="top:734.8px"><select><option>Да</option><option>Нет</option></select><svg viewBox="0 0 16 11"><polyline points="1.5,2.3 8,8.4 14.5,2.3" fill="none" stroke="#111" stroke-width="3.2"/></svg></div>
<div class="hl" style="top:764.3px"></div>
<div class="lab" style="top:776.3px">смс 6</div>
<div class="inp" style="top:768.5px"><input type="text" value="Расход  дизеля"></div>
<div class="sel" style="top:769.5px"><select><option>Да</option><option>Нет</option></select><svg viewBox="0 0 16 11"><polyline points="1.5,2.3 8,8.4 14.5,2.3" fill="none" stroke="#111" stroke-width="3.2"/></svg></div>
<div class="hl" style="top:799.0px"></div>
<div class="lab" style="top:811.0px">смс 7</div>
<div class="inp" style="top:803.2px"><input type="text" value="Статус работы"></div>
<div class="sel" style="top:804.2px"><select><option>Да</option><option>Нет</option></select><svg viewBox="0 0 16 11"><polyline points="1.5,2.3 8,8.4 14.5,2.3" fill="none" stroke="#111" stroke-width="3.2"/></svg></div>
<div class="hl" style="top:833.7px"></div>
<div class="lab" style="top:845.7px">смс 8</div>
<div class="inp" style="top:837.9px"><input type="text" value=""></div>
<div class="sel" style="top:838.9px"><select><option>Да</option><option>Нет</option></select><svg viewBox="0 0 16 11"><polyline points="1.5,2.3 8,8.4 14.5,2.3" fill="none" stroke="#111" stroke-width="3.2"/></svg></div>
<div class="hl" style="top:868.4px"></div>
<div class="lab" style="top:880.4px">смс 9</div>
<div class="inp" style="top:872.6px"><input type="text" value=""></div>
<div class="sel" style="top:873.6px"><select><option>Да</option><option>Нет</option></select><svg viewBox="0 0 16 11"><polyline points="1.5,2.3 8,8.4 14.5,2.3" fill="none" stroke="#111" stroke-width="3.2"/></svg></div>
<div class="hl" style="top:903.1px"></div>
<div class="lab" style="top:915.1px">смс 10</div>
<div class="inp" style="top:907.3px"><input type="text" value=""></div>
<div class="sel" style="top:908.3px"><select><option>Да</option><option>Нет</option></select><svg viewBox="0 0 16 11"><polyline points="1.5,2.3 8,8.4 14.5,2.3" fill="none" stroke="#111" stroke-width="3.2"/></svg></div>
</div>
<svg id="gear" viewBox="1.7 1.7 96.6 96.6" preserveAspectRatio="none"><defs><clipPath id="rc"><circle cx="50" cy="50" r="30.5"/></clipPath></defs><path d="M55.82 8.61 L62.07 2.30 L75.19 7.74 L75.16 16.62 L83.38 24.84 L92.26 24.81 L97.70 37.93 L91.39 44.18 L91.39 55.82 L97.70 62.07 L92.26 75.19 L83.38 75.16 L75.16 83.38 L75.19 92.26 L62.07 97.70 L55.82 91.39 L44.18 91.39 L37.93 97.70 L24.81 92.26 L24.84 83.38 L16.62 75.16 L7.74 75.19 L2.30 62.07 L8.61 55.82 L8.61 44.18 L2.30 37.93 L7.74 24.81 L16.62 24.84 L24.84 16.62 L24.81 7.74 L37.93 2.30 L44.18 8.61Z" fill="#1d9bf0" stroke="#1d9bf0" stroke-width="1.8" stroke-linejoin="round"/><circle cx="50" cy="50" r="30" fill="none" stroke="#f3eff6" stroke-width="2.6"/><g clip-path="url(#rc)"><rect x="-45" y="-6.5" width="45" height="13" fill="#f3eff6" transform="translate(53.6 49) rotate(-37.5)"/><ellipse cx="53.3" cy="48" rx="13.4" ry="11.4" fill="#f3eff6"/><ellipse cx="57.7" cy="47.2" rx="7.7" ry="7.2" fill="#1d9bf0"/><rect x="0" y="-4.3" width="16" height="8.6" fill="#1d9bf0" transform="translate(58.1 47.2) rotate(-55)"/></g></svg>
</div></body></html>
